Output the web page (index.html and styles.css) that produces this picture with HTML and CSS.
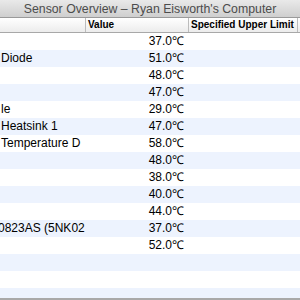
FILE: index.html
```html
<!DOCTYPE html>
<html lang="en">
<head>
<meta charset="UTF-8">
<title>Sensor Overview</title>
<link rel="stylesheet" href="styles.css">
</head>
<body>

<div class="win">
<div class="titlebar">Sensor Overview – Ryan Eisworth's Computer</div>

<div class="head">
<div class="hc"></div>
<div class="hc">Value</div>
<div class="hc">Specified Upper Limit</div>
<div class="hc"></div>
</div>

<div class="rows">
<div class="row"><div class="name"></div><div class="val">37.0℃</div><div></div><div></div></div>
<div class="row"><div class="name">Diode</div><div class="val">51.0℃</div><div></div><div></div></div>
<div class="row"><div class="name"></div><div class="val">48.0℃</div><div></div><div></div></div>
<div class="row"><div class="name"></div><div class="val">47.0℃</div><div></div><div></div></div>
<div class="row"><div class="name">le</div><div class="val">29.0℃</div><div></div><div></div></div>
<div class="row"><div class="name">Heatsink 1</div><div class="val">47.0℃</div><div></div><div></div></div>
<div class="row"><div class="name">Temperature D</div><div class="val">58.0℃</div><div></div><div></div></div>
<div class="row"><div class="name"></div><div class="val">48.0℃</div><div></div><div></div></div>
<div class="row"><div class="name"></div><div class="val">38.0℃</div><div></div><div></div></div>
<div class="row"><div class="name"></div><div class="val">40.0℃</div><div></div><div></div></div>
<div class="row"><div class="name"></div><div class="val">44.0℃</div><div></div><div></div></div>
<div class="row"><div class="name cut">0823AS (5NK02</div><div class="val">37.0℃</div><div></div><div></div></div>
<div class="row"><div class="name"></div><div class="val">52.0℃</div><div></div><div></div></div>
<div class="row"></div>
<div class="row"></div>
<div class="row"></div>
</div>

<div class="bottom"></div>
</div>

</body>
</html>
```

FILE: styles.css
```css
html,body{margin:0;background:#fff;font-family:"Liberation Sans",Arial,sans-serif}
.win{width:300px;height:300px;overflow:hidden;display:flex;flex-direction:column}
.titlebar{height:18px;line-height:18px;text-align:center;font-size:12.3px;color:#4c4c4c;background:linear-gradient(#e9e9e9,#cfcfcf);border-bottom:1px solid #9a9a9a;box-sizing:border-box;white-space:nowrap}
.head{height:15px;display:grid;grid-template-columns:86px 103px 109px 1fr;background:linear-gradient(#fff,#ececec);border-bottom:1px solid #a8a8a8;box-sizing:border-box}
.hc{font-size:10px;font-weight:bold;line-height:14px;padding-left:2px;border-right:1px solid #bcbcbc;white-space:nowrap;overflow:hidden}
.rows{flex:1;overflow:hidden}
.row{height:17px;display:grid;grid-template-columns:86px 103px 109px 1fr;font-size:12px;line-height:17px;color:#000}
.row:nth-child(even){background:#edf3fe}
.name{padding-left:1px;white-space:nowrap;overflow:hidden}
.cut{text-indent:-3px}
.val{text-align:right;padding-right:5px}
.bottom{height:2px;background:#a9a9a9}
```
